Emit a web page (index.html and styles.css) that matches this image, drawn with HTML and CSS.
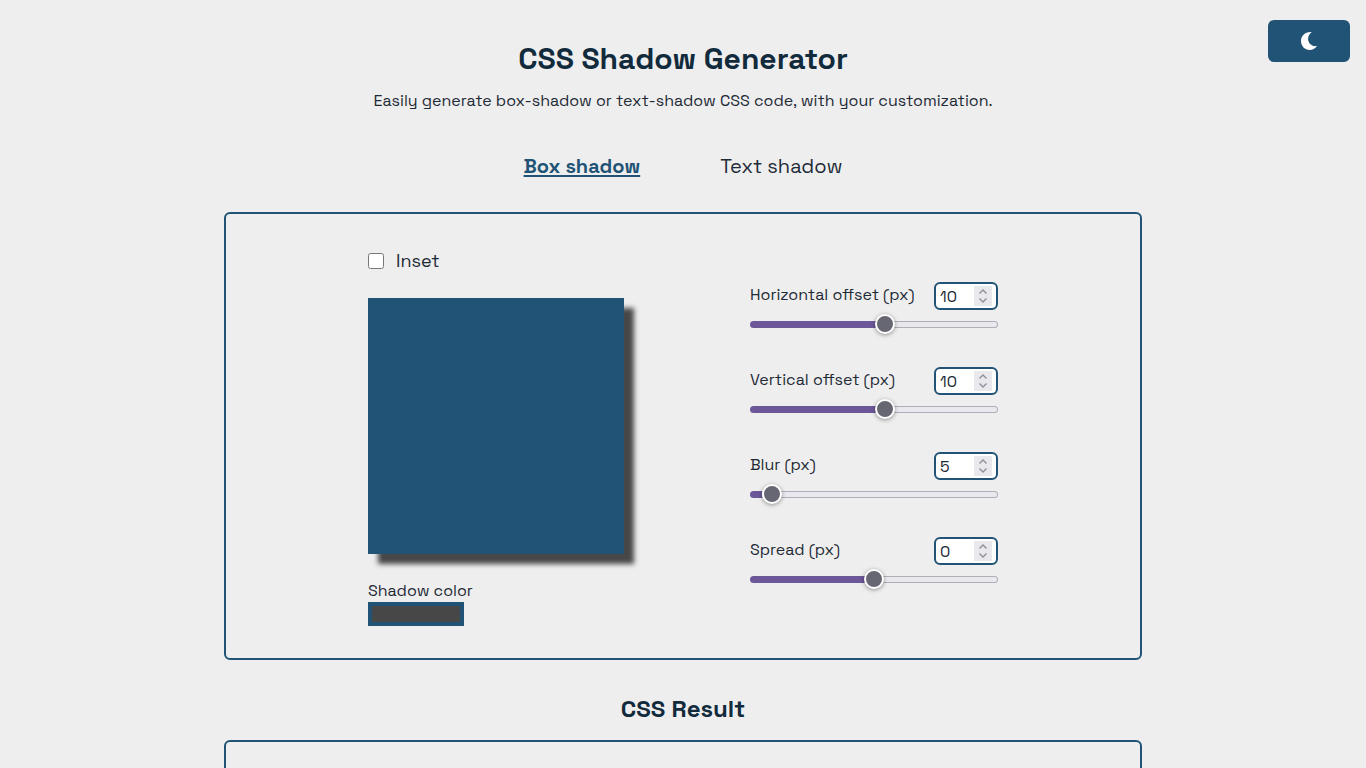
FILE: index.html
```html
<!DOCTYPE html>
<html lang="en">
<head>
<meta charset="utf-8">
<meta name="viewport" content="width=device-width, initial-scale=1">
<title>CSS Shadow Generator</title>
<link rel="stylesheet" href="styles.css">
</head>
<body>
<button class="theme-toggle" type="button" aria-label="Dark mode">
  <svg width="18" height="20" viewBox="0 0 18 20" aria-hidden="true"><path fill="#fff" d="M11.800 1C7.600 3.900 6.800 9.800 10.500 13.300C12.500 15.100 15 15.500 17.200 14.800C15.500 17.500 12.900 19 9.800 19C4.800 19 1 15 1 10C1 4.800 5.200 .4 11.800 1Z"/></svg>
</button>
<header class="page-header">
  <h1 class="title">CSS Shadow Generator</h1>
  <p class="subtitle">Easily generate box-shadow or text-shadow CSS code, with your customization.</p>
</header>
<nav class="tabs">
  <a class="tab tab-active" href="#box">Box shadow</a>
  <a class="tab" href="#text">Text shadow</a>
</nav>
<main class="content">
  <section class="panel editor" id="box">
    <div class="preview-column">
      <label class="inset"><input class="inset-box" type="checkbox">Inset</label>
      <div class="preview"></div>
      <label class="color-label" for="color">Shadow color</label>
      <input class="color" id="color" type="color" value="#474747">
    </div>
    <div class="controls">
      <div class="control">
        <div class="control-head">
          <label for="h-range">Horizontal offset (px)</label>
          <span class="number"><input class="number-input" type="number" value="10" aria-label="Horizontal offset value"><svg class="stepper" viewBox="0 0 18 20" aria-hidden="true"><path d="M5.500 7.500L9 4l3.500 3.500M5.500 12.500L9 16l3.500-3.500"/></svg></span>
        </div>
        <input class="range" id="h-range" type="range" min="-100" max="100" value="10" style="--fill:55%">
      </div>
      <div class="control">
        <div class="control-head">
          <label for="v-range">Vertical offset (px)</label>
          <span class="number"><input class="number-input" type="number" value="10" aria-label="Vertical offset value"><svg class="stepper" viewBox="0 0 18 20" aria-hidden="true"><path d="M5.500 7.500L9 4l3.500 3.500M5.500 12.500L9 16l3.500-3.500"/></svg></span>
        </div>
        <input class="range" id="v-range" type="range" min="-100" max="100" value="10" style="--fill:55%">
      </div>
      <div class="control">
        <div class="control-head">
          <label for="b-range">Blur (px)</label>
          <span class="number"><input class="number-input" type="number" value="5" aria-label="Blur value"><svg class="stepper" viewBox="0 0 18 20" aria-hidden="true"><path d="M5.500 7.500L9 4l3.500 3.500M5.500 12.500L9 16l3.500-3.500"/></svg></span>
        </div>
        <input class="range" id="b-range" type="range" min="0" max="100" value="5" style="--fill:5%">
      </div>
      <div class="control">
        <div class="control-head">
          <label for="s-range">Spread (px)</label>
          <span class="number"><input class="number-input" type="number" value="0" aria-label="Spread value"><svg class="stepper" viewBox="0 0 18 20" aria-hidden="true"><path d="M5.500 7.500L9 4l3.500 3.500M5.500 12.500L9 16l3.500-3.500"/></svg></span>
        </div>
        <input class="range" id="s-range" type="range" min="-100" max="100" value="0" style="--fill:50%">
      </div>
    </div>
  </section>
  <h2 class="result-title">CSS Result</h2>
  <section class="panel result"></section>
</main>
</body>
</html>
```
FILE: styles.css
```css
* {
  box-sizing: border-box;
}

html {
  scrollbar-width: none;
}

body {
  margin: 0;
  padding: 40px 8px 0;
  background: #eee;
  color: #1e2a36;
  font-family: "Space Grotesk", Inter, "Liberation Sans", sans-serif;
  font-size: 16px;
  line-height: 20px;
}

.theme-toggle {
  position: absolute;
  top: 20px;
  right: 16px;
  display: flex;
  align-items: center;
  justify-content: center;
  width: 82px;
  height: 42px;
  padding: 0;
  border: 0;
  border-radius: 6px;
  background: #205375;
}

.page-header {
  text-align: center;
}

.title {
  margin: 0;
  color: #112b3c;
  font-size: 30px;
  font-weight: 600;
  line-height: 38px;
}

.subtitle {
  margin: 13px 0 0;
}

.tabs {
  display: flex;
  justify-content: center;
  gap: 80px;
  margin-top: 42px;
}

.tab {
  color: inherit;
  font-size: 20px;
  line-height: 26px;
  text-decoration: none;
}

.tab-active {
  color: #205375;
  font-weight: 600;
  text-decoration: underline 2px;
  text-underline-offset: 2px;
}

.content {
  width: 68%;
  margin: 33px auto 0;
}

.panel {
  border: 2px solid #205375;
  border-radius: 6px;
}

.editor {
  display: flex;
  justify-content: center;
  gap: 126px;
  padding: 34px 16px 32px;
}

.preview-column {
  display: flex;
  flex-direction: column;
  align-items: flex-start;
}

.inset {
  display: flex;
  align-items: center;
  gap: 12px;
  font-size: 18px;
  line-height: 25px;
}

.inset-box {
  width: 16px;
  height: 16px;
  margin: 0;
}

.preview {
  width: 256px;
  height: 256px;
  margin: 25px 0 26px;
  background: #205375;
  box-shadow: 10px 10px 5px 0 #474747;
}

.color-label {
  line-height: 22px;
}

.color {
  width: 96px;
  height: 24px;
  padding: 0;
  border: 4px solid #205375;
  background: #474747;
}

.color::-webkit-color-swatch-wrapper {
  padding: 0;
}

.color::-webkit-color-swatch {
  border: 0;
}

.controls {
  display: flex;
  flex-direction: column;
  gap: 33px;
  width: 248px;
  padding-top: 34px;
}

.control-head {
  display: flex;
  justify-content: space-between;
  align-items: flex-start;
  line-height: 26px;
}

.number {
  display: flex;
  align-items: center;
  width: 64px;
  height: 28px;
  padding: 0 4px;
  border: 2px solid #205375;
  border-radius: 6px;
  background: #fff;
}

.number-input {
  flex: 1;
  min-width: 0;
  padding: 2px 0 0;
  border: 0;
  outline: 0;
  background: none;
  color: inherit;
  font: inherit;
  appearance: textfield;
}

.number-input::-webkit-inner-spin-button {
  display: none;
}

.stepper {
  flex: none;
  width: 18px;
  height: 20px;
  background: #e9e9ed;
  fill: none;
  stroke: #8f8f9d;
  stroke-width: 1.4;
}

.range {
  display: block;
  width: 100%;
  height: 20px;
  margin: 4px 0 0;
  appearance: none;
  background: none;
}

.range::-webkit-slider-runnable-track {
  height: 7px;
  border: 1px solid transparent;
  border-radius: 4px;
  background:
    linear-gradient(to right, #6c5898 var(--fill), transparent var(--fill)) border-box,
    linear-gradient(#e9e9ed, #e9e9ed) padding-box,
    linear-gradient(#afaebb, #afaebb) border-box;
}

.range::-webkit-slider-thumb {
  width: 20px;
  height: 20px;
  margin-top: -8px;
  border: 2px solid #fff;
  border-radius: 50%;
  appearance: none;
  background: #676774;
  box-shadow: 0 1px 4px #0006;
}

.result-title {
  margin: 34px 0 16px;
  color: #112b3c;
  font-size: 24px;
  font-weight: 600;
  line-height: 30px;
  text-align: center;
}

.result {
  min-height: 160px;
}
```
